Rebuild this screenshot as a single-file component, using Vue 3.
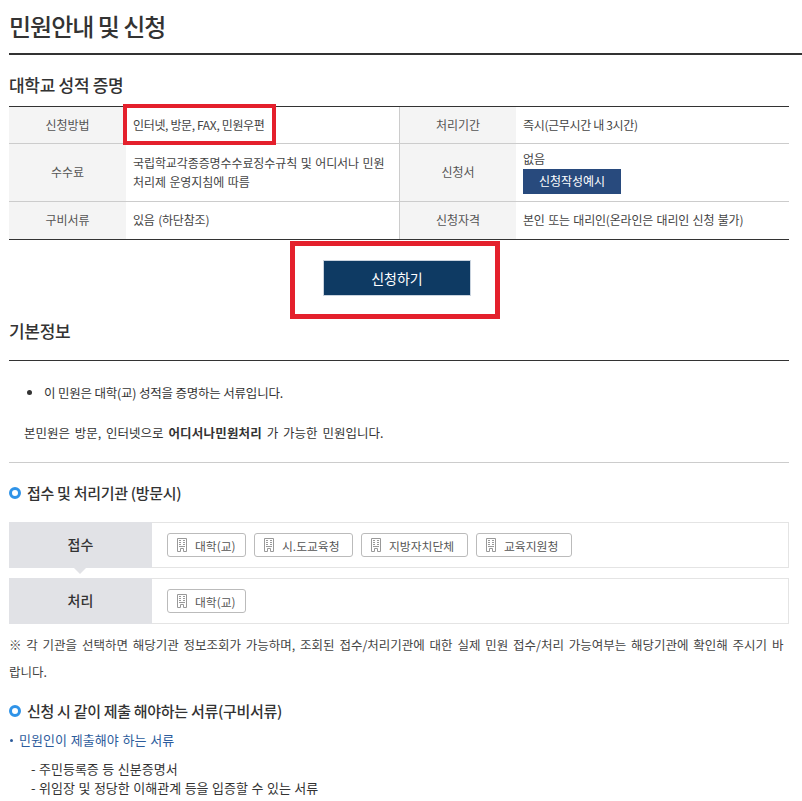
<script setup>
const infoRows = [
  { h1: '신청방법', d1: '인터넷, 방문, FAX, 민원우편', h2: '처리기간', d2: '즉시(근무시간 내 3시간)', cls: 'row-a', mark: true },
  { h1: '수수료', d1: '국립학교각종증명수수료징수규칙 및 어디서나 민원 처리제 운영지침에 따름', h2: '신청서', d2: '없음', cls: 'row-b', btn: '신청작성예시' },
  { h1: '구비서류', d1: '있음 (하단참조)', h2: '신청자격', d2: '본인 또는 대리인(온라인은 대리인 신청 불가)', cls: 'row-c' },
];

const orgRows = [
  { label: '접수', arrow: true, orgs: [{ name: '대학(교)', w: 79 }, { name: '시.도교육청', w: 99 }, { name: '지방자치단체', w: 107 }, { name: '교육지원청', w: 96 }] },
  { label: '처리', arrow: false, orgs: [{ name: '대학(교)', w: 79 }] },
];
</script>

<template>
  <div class="page">
    <h1 class="title">민원안내 및 신청</h1>
    <h2 class="sub first">대학교 성적 증명</h2>

    <div class="info">
      <div v-for="row in infoRows" :key="row.h1" class="info-row" :class="row.cls">
        <div class="th">{{ row.h1 }}</div>
        <div class="td">
          <span>{{ row.d1 }}</span>
          <i v-if="row.mark" class="mark"></i>
        </div>
        <div class="th">{{ row.h2 }}</div>
        <div class="td">
          <span>{{ row.d2 }}</span>
          <a v-if="row.btn" class="small-btn">{{ row.btn }}</a>
        </div>
      </div>
    </div>

    <div class="apply-wrap">
      <div class="apply-mark">
        <button class="apply">신청하기</button>
      </div>
    </div>

    <h2 class="sub basic">기본정보</h2>
    <div class="basic-box">
      <ul class="bullets">
        <li>이 민원은 대학(교) 성적을 증명하는 서류입니다.</li>
      </ul>
      <p class="note">본민원은 방문, 인터넷으로 <b>어디서나민원처리</b> 가 가능한 민원입니다.</p>
    </div>

    <h3 class="dot-title org-title"><i class="dot"></i>접수 및 처리기관 (방문시)</h3>

    <div class="orgs">
      <div v-for="row in orgRows" :key="row.label" class="org-row">
        <div class="org-label" :class="{ arrow: row.arrow }">{{ row.label }}</div>
        <div class="org-list">
          <a v-for="org in row.orgs" :key="org.name" class="chip" :style="{ width: org.w + 'px' }">
            <svg class="bld" width="10" height="14" viewBox="0 0 10 14" fill="none" stroke="#999" stroke-width="1">
              <path d="M.5 13.5V.5h9v13M.5 13.5h3v-3h3v3h3" />
              <path d="M2 2.5h2M6 2.5h2M2 4.5h2M6 4.5h2M2 6.5h2M6 6.5h2M2 8.5h6" />
            </svg>
            {{ org.name }}
          </a>
        </div>
      </div>
    </div>

    <p class="warn">※ 각 기관을 선택하면 해당기관 정보조회가 가능하며, 조회된 접수/처리기관에 대한 실제 민원 접수/처리 가능여부는 해당기관에 확인해 주시기 바랍니다.</p>

    <h3 class="dot-title docs-title"><i class="dot"></i>신청 시 같이 제출 해야하는 서류(구비서류)</h3>
    <p class="blue">민원인이 제출해야 하는 서류</p>
    <div class="docs">
      <div>- 주민등록증 등 신분증명서</div>
      <div>- 위임장 및 정당한 이해관계 등을 입증할 수 있는 서류</div>
    </div>
  </div>
</template>

<style scoped>
.page {
  width: 780px;
  height: 801px;
  overflow: hidden;
  padding: 0 13px 0 9px;
  font-family: "Noto Sans CJK KR", "Noto Sans", sans-serif;
  font-size: 13px;
  color: #333;
  box-sizing: content-box;
}

.title {
  margin: 0 -13px 0 0;
  height: 53px;
  border-bottom: 2px solid #333;
  font-size: 24px;
  line-height: 52px;
  font-weight: 500;
  letter-spacing: -1px;
  box-sizing: content-box;
}

.sub {
  margin: 0;
  font-size: 17px;
  font-weight: 500;
  line-height: 24px;
  letter-spacing: -0.3px;
}

.sub.first {
  margin-top: 18px;
  height: 33px;
  line-height: 23px;
}

.info {
  border-top: 1px solid #333;
  border-bottom: 1px solid #333;
}

.info-row {
  display: grid;
  grid-template-columns: 117px 273px 117px 273px;
  border-bottom: 1px solid #ccc;
  box-sizing: border-box;
}

.info-row:last-child {
  border-bottom: 0;
}

.row-a { height: 37px; }
.row-b { height: 58px; }
.row-c { height: 37px; }

.th {
  background: #f4f4f4;
  display: flex;
  align-items: center;
  justify-content: center;
  padding-bottom: 2px;
  color: #555;
  font-size: 12px;
}

.td {
  position: relative;
  display: flex;
  flex-direction: column;
  justify-content: center;
  align-items: flex-start;
  padding: 0 7px 2px;
  font-size: 12px;
  line-height: 19px;
  letter-spacing: -0.1px;
  word-spacing: 1px;
  color: #444;
}

.row-a .td {
  letter-spacing: -0.35px;
  word-spacing: 0;
}

.row-c .td {
  letter-spacing: -0.2px;
  word-spacing: 1px;
}

.th:nth-child(3) {
  border-left: 1px solid #ccc;
}

.mark {
  position: absolute;
  left: -3px;
  top: -3px;
  width: 153px;
  height: 41px;
  border: 4px solid #e4202c;
  box-sizing: border-box;
}

.small-btn {
  display: block;
  width: 98px;
  height: 25px;
  margin-top: 1px;
  background: #284a7d;
  color: #fff;
  text-align: center;
  line-height: 24px;
  font-size: 12px;
  letter-spacing: 0;
}

.apply-wrap {
  display: flex;
  justify-content: center;
  margin: 1px 0 0;
  padding-right: 9px;
}

.apply-mark {
  width: 210px;
  height: 78px;
  border: 5px solid #e4202c;
  box-sizing: border-box;
  display: flex;
  align-items: center;
  justify-content: center;
  padding: 0 0 4px 5px;
}

.apply {
  width: 148px;
  height: 36px;
  border: 1px solid #c9d3de;
  background: #0e3a63;
  color: #fff;
  font-family: inherit;
  font-size: 14px;
  padding: 0;
}

.sub.basic {
  height: 41px;
  border-bottom: 1px solid #333;
  box-sizing: content-box;
}

.basic-box {
  border-bottom: 1px solid #ccc;
  height: 101px;
}

.bullets {
  margin: 0;
  padding: 22px 0 0 35px;
  line-height: 20px;
  font-size: 12.5px;
  letter-spacing: -0.2px;
}

.note {
  margin: 20px 0 0 15px;
  line-height: 20px;
  font-size: 12.5px;
  word-spacing: 2px;
}

.note b {
  font-weight: 700;
  letter-spacing: 0.2px;
}

.dot-title {
  margin: 0;
  display: flex;
  align-items: center;
  font-size: 15px;
  font-weight: 500;
  line-height: 22px;
  letter-spacing: -0.3px;
}

.org-title {
  margin-top: 19px;
  height: 22px;
}

.dot {
  width: 12px;
  height: 12px;
  border: 3px solid #2f93e8;
  border-radius: 50%;
  box-sizing: border-box;
  margin-right: 6px;
}

.orgs {
  margin-top: 18px;
  display: flex;
  flex-direction: column;
  gap: 10px;
}

.org-row {
  display: flex;
  height: 46px;
  border: 1px solid #e4e4e4;
  border-left: 0;
  box-sizing: border-box;
}

.org-label {
  position: relative;
  width: 143px;
  margin-top: -1px;
  margin-bottom: -1px;
  padding-bottom: 2px;
  box-sizing: border-box;
  background: #e1e2e6;
  display: flex;
  align-items: center;
  justify-content: center;
  font-size: 14px;
  font-weight: 500;
}

.org-label.arrow::after {
  content: "";
  position: absolute;
  left: 65px;
  top: 100%;
  border: 6px solid transparent;
  border-top-color: #e1e2e6;
  border-bottom: 0;
}

.org-list {
  display: flex;
  align-items: center;
  gap: 8px;
  padding-left: 15px;
}

.chip {
  display: flex;
  align-items: center;
  gap: 8px;
  height: 24px;
  padding: 0 0 0 9px;
  border: 1px solid #bbb;
  border-radius: 3px;
  box-sizing: border-box;
  font-size: 11.8px;
  color: #555;
  white-space: nowrap;
}

.warn {
  margin: 7px 0 0;
  line-height: 27px;
  font-size: 12.5px;
  word-spacing: 2px;
  color: #444;
}

.docs-title {
  margin-top: 15px;
  height: 22px;
}

.blue {
  position: relative;
  margin: 8px 0 0;
  padding-left: 10px;
  line-height: 20px;
  font-size: 13px;
  word-spacing: 1px;
  color: #2d5c9c;
}

.blue::before {
  content: "";
  position: absolute;
  left: 1px;
  top: 9px;
  width: 3px;
  height: 3px;
  border-radius: 50%;
  background: #2d5c9c;
}

.docs {
  margin-top: 9px;
  padding-left: 22px;
  line-height: 19px;
  font-size: 13px;
  word-spacing: 0.6px;
}
</style>
